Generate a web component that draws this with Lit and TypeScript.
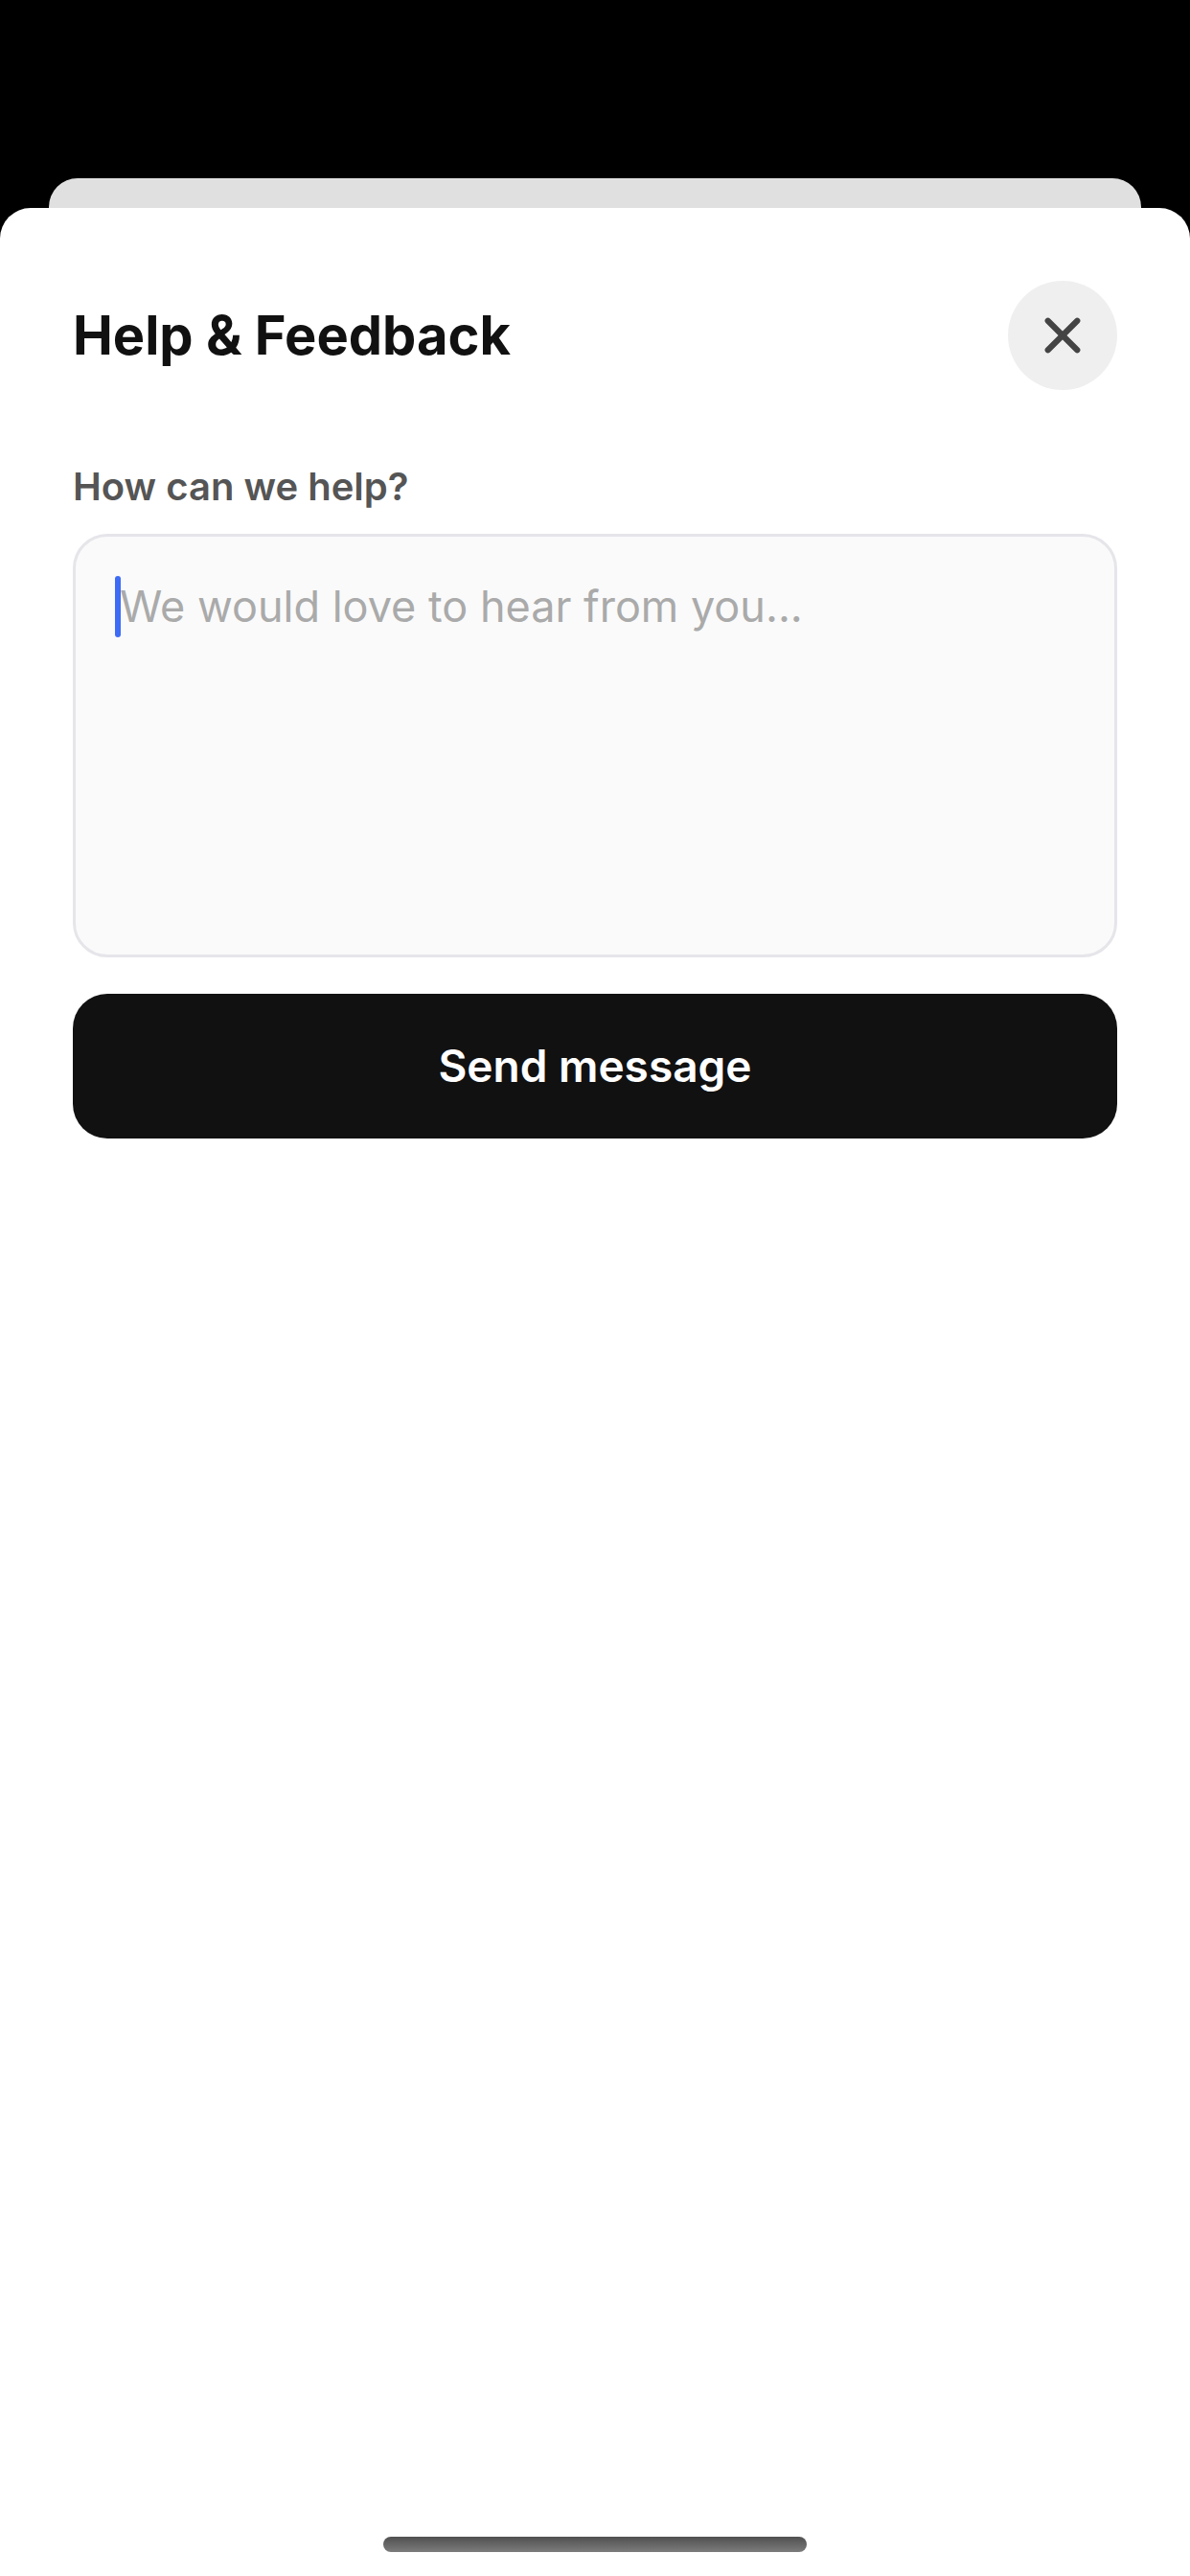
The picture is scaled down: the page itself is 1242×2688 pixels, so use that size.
import { LitElement, html, css } from "lit";
import { customElement, state } from "lit/decorators.js";

@customElement("app-root")
export class AppRoot extends LitElement {
  static styles = css`
    :host {
      display: flex;
      flex-direction: column;
      min-height: 100vh;
      box-sizing: border-box;
      padding-top: 186px;
      background: #000;
      font-family: Inter, "Liberation Sans", sans-serif;
    }
    .behind {
      height: 31px;
      margin: 0 51px;
      border-radius: 30px 30px 0 0;
      background: #e0e0e0;
    }
    .sheet {
      flex: 1;
      display: flex;
      flex-direction: column;
      padding: 76px 76px 25px;
      border-radius: 32px 32px 0 0;
      background: #fff;
    }
    .header {
      display: flex;
      align-items: center;
      justify-content: space-between;
      margin-bottom: 76px;
    }
    .title {
      margin: 0;
      font-size: 56px;
      line-height: 68px;
      font-weight: 700;
      color: #111;
    }
    .close {
      display: flex;
      align-items: center;
      justify-content: center;
      width: 114px;
      height: 114px;
      padding: 0;
      border: 0;
      border-radius: 50%;
      background: #efefef;
      color: #444;
      cursor: pointer;
    }
    .close-icon {
      display: block;
      width: 40px;
      height: 40px;
    }
    .form {
      display: flex;
      flex-direction: column;
    }
    .label {
      margin-bottom: 24px;
      font-size: 40px;
      line-height: 50px;
      font-weight: 600;
      color: #555;
    }
    .field {
      position: relative;
      display: flex;
      margin-bottom: 38px;
    }
    .message {
      flex: 1;
      min-width: 0;
      height: 442px;
      box-sizing: border-box;
      margin: 0;
      padding: 44px 46px;
      border: 3px solid #e5e5ea;
      border-radius: 36px;
      outline: none;
      resize: none;
      background: #fafafa;
      color: #111;
      caret-color: #3d6bf5;
      font-family: inherit;
      font-size: 45px;
      line-height: 58px;
      font-weight: 400;
    }
    .message::placeholder {
      color: #aaa;
      opacity: 1;
    }
    .caret {
      position: absolute;
      left: 44px;
      top: 44px;
      width: 6px;
      height: 64px;
      border-radius: 3px;
      background: #3d6bf5;
      pointer-events: none;
    }
    .message:focus + .caret,
    .message:not(:placeholder-shown) + .caret {
      display: none;
    }
    .send {
      padding: 46px 48px;
      border: 0;
      border-radius: 36px;
      background: #111;
      color: #fff;
      font-family: inherit;
      font-size: 46px;
      line-height: 59px;
      font-weight: 600;
      cursor: pointer;
    }
    .home {
      width: 442px;
      max-width: 60%;
      height: 16px;
      margin: auto auto 0;
      border-radius: 8px;
      background: linear-gradient(#505050, #7c7c7c);
    }
  `;

  @state() private message = "";

  private onInput(event: Event) {
    this.message = (event.target as HTMLTextAreaElement).value;
  }

  private onSubmit(event: Event) {
    event.preventDefault();
    this.message = "";
  }

  render() {
    return html`
      <div class="behind"></div>
      <main class="sheet">
        <header class="header">
          <h1 class="title">Help &amp; Feedback</h1>
          <button class="close" type="button" aria-label="Close">
            <svg class="close-icon" viewBox="0 0 40 40" aria-hidden="true">
              <path
                d="M4.7 4.7 35.3 35.3M35.3 4.7 4.7 35.3"
                fill="none"
                stroke="currentColor"
                stroke-width="6.2"
                stroke-linecap="round"
              />
            </svg>
          </button>
        </header>
        <form class="form" @submit=${this.onSubmit}>
          <label class="label" for="message">How can we help?</label>
          <div class="field">
            <textarea
              class="message"
              id="message"
              placeholder="We would love to hear from you..."
              .value=${this.message}
              @input=${this.onInput}
            ></textarea>
            <span class="caret" aria-hidden="true"></span>
          </div>
          <button class="send" type="submit">Send message</button>
        </form>
        <div class="home" aria-hidden="true"></div>
      </main>
    `;
  }
}
